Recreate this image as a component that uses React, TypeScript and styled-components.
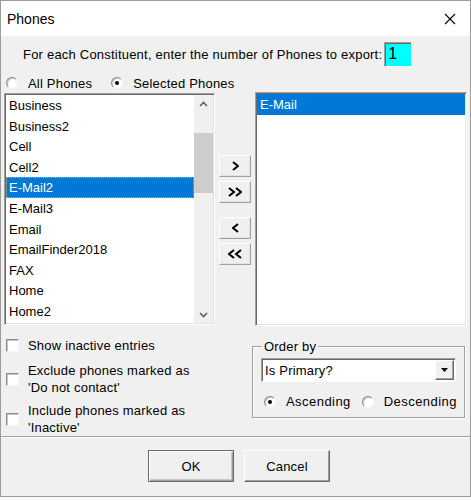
import * as React from "react";
import styled, { createGlobalStyle } from "styled-components";

const GlobalStyle = createGlobalStyle`
  html, body {
    margin: 0;
    padding: 0;
    background: #f8f8f8;
  }
  body {
    font-family: "Liberation Sans", Arial, sans-serif;
    font-size: 13px;
    letter-spacing: 0.2px;
    color: #000;
  }
`;

const Window = styled.div`
  width: 471px;
  height: 497px;
  box-sizing: border-box;
  border: 1px solid #9c9c9c;
  background: #f0f0f0;
  display: flex;
  flex-direction: column;
`;

const TitleBar = styled.div`
  height: 35px;
  background: #fff;
  display: flex;
  align-items: center;
  justify-content: space-between;
  padding: 0 14px 0 6px;
  letter-spacing: 0;
`;

const Title = styled.span`
  font-size: 14px;
  padding-top: 1px;
`;

const Body = styled.div`
  flex: 1;
  display: flex;
  flex-direction: column;
  padding: 0 3px;
`;

const ExportRow = styled.div`
  margin-top: 6px;
  height: 25px;
  display: flex;
  align-items: center;
  gap: 2px;
  padding-left: 19px;
`;

const ExportLabel = styled.span`
  letter-spacing: 0.21px;
`;

const CountInput = styled.div`
  width: 28px;
  height: 25px;
  box-sizing: border-box;
  background: #00ffff;
  border: 1px solid;
  border-color: #a0a0a0 #fff #fff #a0a0a0;
  box-shadow: inset 1px 1px 0 #696969;
  font-size: 16px;
  line-height: 22px;
  padding-left: 3px;
`;

const RadioRow = styled.div`
  margin-top: 8px;
  height: 16px;
  display: flex;
  align-items: center;
  gap: 19px;
  padding-left: 2px;
`;

const RadioLabel = styled.label`
  display: flex;
  align-items: center;
  gap: 10px;
  white-space: nowrap;
`;

const RadioCircle = styled.span<{ $checked?: boolean }>`
  position: relative;
  width: 12px;
  height: 12px;
  box-sizing: border-box;
  border-radius: 50%;
  background: #fff;
  border: 1px solid;
  border-color: #8a8a8a #f4f4f4 #f4f4f4 #8a8a8a;
  box-shadow: inset 1px 1px 0 #c8c8c8;

  &::after {
    content: "";
    display: ${(p) => (p.$checked ? "block" : "none")};
    position: absolute;
    left: 3px;
    top: 3px;
    width: 4px;
    height: 4px;
    border-radius: 50%;
    background: #000;
  }
`;

const ListsRow = styled.div`
  margin-top: 1px;
  display: flex;
  align-items: flex-start;
  gap: 4px;
`;

const ListBox = styled.div<{ $width: number; $height: number; $offset?: number }>`
  width: ${(p) => p.$width}px;
  height: ${(p) => p.$height}px;
  margin-top: ${(p) => p.$offset ?? 0}px;
  box-sizing: border-box;
  background: #fff;
  border: 1px solid;
  border-color: #a0a0a0 #fff #fff #a0a0a0;
  box-shadow: inset 1px 1px 0 #696969, inset -1px -1px 0 #e3e3e3;
  padding: 1px;
  display: flex;
  letter-spacing: 0;
`;

const Items = styled.div`
  flex: 1;
  display: flex;
  flex-direction: column;
`;

const Item = styled.div<{ $selected?: boolean; $focus?: boolean }>`
  height: 20.6px;
  line-height: 20px;
  box-sizing: border-box;
  padding-left: 2px;
  white-space: nowrap;
  background: ${(p) => (p.$selected ? "#0078d7" : "transparent")};
  color: ${(p) => (p.$selected ? "#fff" : "#000")};
  border: 1px ${(p) => (p.$focus ? "dotted #f0a040" : "solid transparent")};
`;

const ScrollBar = styled.div`
  width: 19px;
  display: flex;
  flex-direction: column;
  background: #f0f0f0;
`;

const ScrollArrow = styled.div`
  height: 17px;
  display: flex;
  align-items: center;
  justify-content: center;
`;

const ScrollTrack = styled.div`
  flex: 1;
  padding-top: 21px;
`;

const ScrollThumb = styled.div`
  height: 60px;
  background: #cdcdcd;
`;

const MoveColumn = styled.div`
  width: 32px;
  margin-top: 63px;
  display: flex;
  flex-direction: column;
  gap: 4px;
`;

const MoveButton = styled.button<{ $gapAbove?: boolean }>`
  width: 32px;
  height: 22px;
  margin-top: ${(p) => (p.$gapAbove ? 10 : 0)}px;
  padding: 0;
  box-sizing: border-box;
  background: #f0f0f0;
  border: 1px solid;
  border-color: #fff #a0a0a0 #a0a0a0 #fff;
  box-shadow: inset -1px -1px 0 #e3e3e3;
  display: flex;
  align-items: center;
  justify-content: center;
`;

const BottomArea = styled.div`
  display: flex;
  justify-content: space-between;
  align-items: flex-start;
`;

const CheckColumn = styled.div`
  padding: 11px 0 0 2px;
  display: flex;
  flex-direction: column;
`;

const CheckRow = styled.label<{ $space?: number }>`
  display: flex;
  align-items: center;
  gap: 9px;
  margin-top: ${(p) => p.$space ?? 0}px;
  line-height: 17px;
`;

const CheckBox = styled.span`
  width: 13px;
  height: 13px;
  flex: none;
  box-sizing: border-box;
  background: #fff;
  border: 1px solid;
  border-color: #8a8a8a #f4f4f4 #f4f4f4 #8a8a8a;
  box-shadow: inset 1px 1px 0 #c8c8c8;
`;

const GroupBox = styled.fieldset`
  margin: 14px 2px 0 0;
  width: 213px;
  height: 78px;
  box-sizing: border-box;
  border: 1px solid #a0a0a0;
  box-shadow: inset 1px 1px 0 #fff, 1px 1px 0 #fff;
  padding: 5px 0 0 8px;
`;

const Legend = styled.legend`
  padding: 0 2px;
  margin-left: 1px;
  line-height: 13px;
`;

const Select = styled.div`
  width: 195px;
  height: 24px;
  box-sizing: border-box;
  background: #fff;
  border: 1px solid;
  border-color: #a0a0a0 #fff #fff #a0a0a0;
  box-shadow: inset 1px 1px 0 #696969;
  display: flex;
  align-items: center;
  padding: 1px 1px 1px 3px;
`;

const SelectText = styled.span`
  flex: 1;
`;

const DropButton = styled.span`
  width: 19px;
  height: 20px;
  box-sizing: border-box;
  background: #f0f0f0;
  border: 1px solid;
  border-color: #fff #696969 #696969 #fff;
  box-shadow: inset -1px -1px 0 #a0a0a0;
  display: flex;
  align-items: center;
  justify-content: center;
`;

const SortRow = styled.div`
  margin-top: 12px;
  padding-left: 3px;
  display: flex;
  gap: 11px;
  letter-spacing: 0.45px;
`;

const Separator = styled.div`
  margin: 0 -3px;
  height: 1px;
  background: #a0a0a0;
  border-bottom: 1px solid #fff;
`;

const ButtonRow = styled.div`
  margin-top: 12px;
  padding-left: 144px;
  display: flex;
  gap: 10px;
`;

const DialogButton = styled.button<{ $primary?: boolean }>`
  width: 86px;
  height: 32px;
  box-sizing: border-box;
  background: #f0f0f0;
  font-family: inherit;
  font-size: 13px;
  letter-spacing: 0.2px;
  color: #000;
  padding: 0;
  border: 1px solid;
  border-color: ${(p) =>
    p.$primary ? "#696969" : "#fff #696969 #696969 #fff"};
  box-shadow: ${(p) =>
    p.$primary
      ? "inset 1px 1px 0 #fff, inset -1px -1px 0 #a0a0a0, inset -2px -2px 0 #c8c8c8"
      : "inset -1px -1px 0 #a0a0a0"};
`;

const CloseIcon = () => (
  <svg width="12" height="12" viewBox="0 0 12 12">
    <path d="M1 1 L11 11 M11 1 L1 11" stroke="#000" strokeWidth="1.1" />
  </svg>
);

const Chevron = ({ dir, double }: { dir: "left" | "right"; double?: boolean }) => {
  const one = dir === "right" ? "M0 1 L5 5 L0 9" : "M5 1 L0 5 L5 9";
  return (
    <svg width={double ? 14 : 7} height="11" viewBox={double ? "-1 0 14 11" : "-1 0 7 11"}>
      <path d={one} stroke="#000" strokeWidth="2" fill="none" />
      {double && (
        <path d={one} transform="translate(7 0)" stroke="#000" strokeWidth="2" fill="none" />
      )}
    </svg>
  );
};

const ScrollChevron = ({ up }: { up?: boolean }) => (
  <svg width="9" height="6" viewBox="0 0 9 6">
    <path
      d={up ? "M1 5 L4.5 1.5 L8 5" : "M1 1 L4.5 4.5 L8 1"}
      stroke="#606060"
      strokeWidth="1.6"
      fill="none"
    />
  </svg>
);

const available = [
  "Business",
  "Business2",
  "Cell",
  "Cell2",
  "E-Mail2",
  "E-Mail3",
  "Email",
  "EmailFinder2018",
  "FAX",
  "Home",
  "Home2",
];

const App = () => {
  return (
    <>
      <GlobalStyle />
      <Window>
        <TitleBar>
          <Title>Phones</Title>
          <CloseIcon />
        </TitleBar>
        <Body>
          <ExportRow>
            <ExportLabel>For each Constituent, enter the number of Phones to export:</ExportLabel>
            <CountInput>1</CountInput>
          </ExportRow>

          <RadioRow>
            <RadioLabel>
              <RadioCircle />
              All Phones
            </RadioLabel>
            <RadioLabel>
              <RadioCircle $checked />
              Selected Phones
            </RadioLabel>
          </RadioRow>

          <ListsRow>
            <ListBox $width={211} $height={232} $offset={1}>
              <Items>
                {available.map((name) => (
                  <Item key={name} $selected={name === "E-Mail2"} $focus={name === "E-Mail2"}>
                    {name}
                  </Item>
                ))}
              </Items>
              <ScrollBar>
                <ScrollArrow>
                  <ScrollChevron up />
                </ScrollArrow>
                <ScrollTrack>
                  <ScrollThumb />
                </ScrollTrack>
                <ScrollArrow>
                  <ScrollChevron />
                </ScrollArrow>
              </ScrollBar>
            </ListBox>

            <MoveColumn>
              <MoveButton>
                <Chevron dir="right" />
              </MoveButton>
              <MoveButton>
                <Chevron dir="right" double />
              </MoveButton>
              <MoveButton $gapAbove>
                <Chevron dir="left" />
              </MoveButton>
              <MoveButton>
                <Chevron dir="left" double />
              </MoveButton>
            </MoveColumn>

            <ListBox $width={212} $height={234}>
              <Items>
                <Item $selected>E-Mail</Item>
              </Items>
            </ListBox>
          </ListsRow>

          <BottomArea>
            <CheckColumn>
              <CheckRow>
                <CheckBox />
                Show inactive entries
              </CheckRow>
              <CheckRow $space={8}>
                <CheckBox />
                <span>
                  Exclude phones marked as
                  <br />
                  'Do not contact'
                </span>
              </CheckRow>
              <CheckRow $space={6}>
                <CheckBox />
                <span>
                  Include phones marked as
                  <br />
                  'Inactive'
                </span>
              </CheckRow>
            </CheckColumn>

            <GroupBox>
              <Legend>Order by</Legend>
              <Select>
                <SelectText>Is Primary?</SelectText>
                <DropButton>
                  <svg width="7" height="4" viewBox="0 0 7 4">
                    <path d="M0 0 L7 0 L3.5 4 Z" fill="#000" />
                  </svg>
                </DropButton>
              </Select>
              <SortRow>
                <RadioLabel>
                  <RadioCircle $checked />
                  Ascending
                </RadioLabel>
                <RadioLabel>
                  <RadioCircle />
                  Descending
                </RadioLabel>
              </SortRow>
            </GroupBox>
          </BottomArea>

          <Separator />

          <ButtonRow>
            <DialogButton $primary>OK</DialogButton>
            <DialogButton>Cancel</DialogButton>
          </ButtonRow>
        </Body>
      </Window>
    </>
  );
};

export default App;
